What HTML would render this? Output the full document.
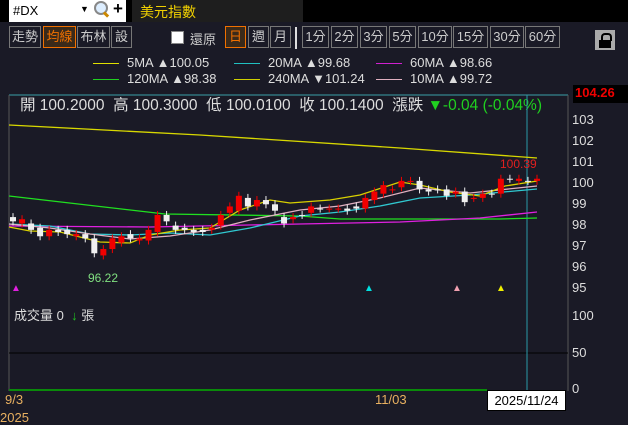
<!DOCTYPE html><html><head><meta charset="utf-8"><style>
body{margin:0;width:628px;height:422px;overflow:hidden;background:#1a1a26;font-family:"Liberation Sans","Noto Sans CJK TC",sans-serif;position:relative;color:#ddd}
.a{position:absolute;white-space:nowrap}
.b{position:absolute;top:26px;height:20px;border:1px solid #777;color:#ccc;font-size:13px;line-height:20px;text-align:center;box-sizing:content-box}
.o{border-color:#f07000;color:#f07000;background:#3a2a1a}
.lg{font-size:13px;color:#ddd}
.ln{display:inline-block;width:26px;height:1px;vertical-align:middle;margin-right:8px}
</style></head><body>
<div class="a" style="left:0;top:0;width:628px;height:22px;background:#000"></div>
<div class="a" style="left:9px;top:0;width:117px;height:22px;background:#fff"></div>
<div class="a" style="left:13px;top:3px;font-size:13px;color:#000">#DX</div>
<div class="a" style="left:80px;top:4px;font-size:9px;color:#000">▼</div>
<div class="a" style="left:94px;top:1px;width:10px;height:10px;border:2px solid #888;border-radius:50%;background:#ddeeff"></div>
<div class="a" style="left:103px;top:13px;width:6px;height:3px;background:#c80;transform:rotate(45deg)"></div>
<div class="a" style="left:113px;top:-1px;font-size:17px;font-weight:bold;color:#000">+</div>
<div class="a" style="left:132px;top:0;width:171px;height:22px;background:#1e1e1e"></div>
<div class="a" style="left:140px;top:2px;font-size:14px;color:#f0d000">美元指數</div>
<div class="b" style="left:9px;width:30px">走勢</div>
<div class="b o" style="left:43px;width:31px">均線</div>
<div class="b" style="left:77px;width:31px">布林</div>
<div class="b" style="left:111px;width:19px">設</div>
<div class="a" style="left:171px;top:31px;width:11px;height:11px;background:#fff;border:1px solid #888"></div>
<div class="a" style="left:190px;top:29px;font-size:13px;color:#ccc">還原</div>
<div class="b o" style="left:225px;width:19px">日</div>
<div class="b" style="left:248px;width:19px">週</div>
<div class="b" style="left:270px;width:19px">月</div>
<div class="a" style="left:295px;top:27px;width:2px;height:22px;background:#ddd"></div>
<div class="b" style="left:302px;width:25px">1分</div>
<div class="b" style="left:331px;width:25px">2分</div>
<div class="b" style="left:360px;width:25px">3分</div>
<div class="b" style="left:389px;width:25px">5分</div>
<div class="b" style="left:418px;width:32px">10分</div>
<div class="b" style="left:453px;width:33px">15分</div>
<div class="b" style="left:490px;width:32px">30分</div>
<div class="b" style="left:525px;width:33px">60分</div>
<div class="a" style="left:595px;top:30px;width:20px;height:20px;background:#aaa"></div>
<div class="a" style="left:601px;top:33px;width:7px;height:6px;border:2px solid #000;border-bottom:none;border-radius:4px 4px 0 0"></div>
<div class="a" style="left:599px;top:40px;width:12px;height:8px;background:#000"></div>
<div class="a lg" style="left:93px;top:55px"><span class="ln" style="background:#e0e000"></span>5MA ▲100.05</div>
<div class="a lg" style="left:234px;top:55px"><span class="ln" style="background:#20c0c0"></span>20MA ▲99.68</div>
<div class="a lg" style="left:376px;top:55px"><span class="ln" style="background:#d020d0"></span>60MA ▲98.66</div>
<div class="a lg" style="left:93px;top:71px"><span class="ln" style="background:#20d020"></span>120MA ▲98.38</div>
<div class="a lg" style="left:234px;top:71px"><span class="ln" style="background:#d0d000"></span>240MA ▼101.24</div>
<div class="a lg" style="left:376px;top:71px"><span class="ln" style="background:#e0b0c0"></span>10MA ▲99.72</div>
<div class="a" style="left:573px;top:85px;width:55px;height:18px;background:#000"></div>
<div class="a" style="left:575px;top:85px;font-size:13px;font-weight:bold;color:#f00000">104.26</div>
<div class="a" style="left:20px;top:93px;font-size:15.5px;color:#ddd">開 100.2000 &nbsp;高 100.3000 &nbsp;低 100.0100 &nbsp;收 100.1400 &nbsp;漲跌 <span style="color:#20d020">▼-0.04 (-0.04%)</span></div>
<svg class="a" style="left:0;top:0" width="628" height="422" id="s">
<line x1="9" y1="95" x2="568" y2="95" stroke="#3aa0a8"/>
<line x1="9" y1="95" x2="9" y2="391" stroke="#555"/>
<line x1="568" y1="95" x2="568" y2="391" stroke="#555"/>
<line x1="9" y1="353" x2="568" y2="353" stroke="#000"/>
<line x1="9" y1="390" x2="487" y2="390" stroke="#0a8a0a" stroke-width="2"/>
<line x1="527" y1="95" x2="527" y2="391" stroke="#2a9aa8"/>
<polyline fill="none" stroke="#d8d800" stroke-width="1.3" points="9,125 200,135 400,148 537,158"/>
<polyline fill="none" stroke="#20e020" stroke-width="1.3" points="9,196 165,214 300,216 340,219 500,219 537,218"/>
<polyline fill="none" stroke="#e020e0" stroke-width="1.3" points="9,226 150,227 300,224 400,222 480,218 537,212"/>
<polyline fill="none" stroke="#30c8d0" stroke-width="1.3" points="9,224 50,226 90,234 130,235 170,233 210,235 250,228 300,216 340,212 380,206 420,198 470,195 537,189"/>
<polyline fill="none" stroke="#e0b0c0" stroke-width="1.3" points="9,224 50,228 90,234 130,239 170,236 210,230 250,220 300,210 340,206 380,198 420,188 470,193 537,186"/>
<polyline fill="none" stroke="#d8d000" stroke-width="1.3" points="9,227 30,231 60,232 100,242 130,243 150,235 180,230 210,228 240,210 270,200 290,203 330,200 360,195 400,182 420,185 450,192 480,196 505,186 537,181"/>
</svg>
<div class="a" style="left:500px;top:157px;font-size:12px;color:#e02020">100.39</div>
<div class="a" style="left:88px;top:271px;font-size:12px;color:#80e080">96.22</div>
<div class="a" style="left:11px;top:283px;font-size:10px;color:#e020e0">▲</div>
<div class="a" style="left:364px;top:283px;font-size:10px;color:#00e0e0">▲</div>
<div class="a" style="left:452px;top:283px;font-size:10px;color:#f0a0b0">▲</div>
<div class="a" style="left:496px;top:283px;font-size:10px;color:#f0f000">▲</div>
<div class="a" style="left:14px;top:305px;font-size:13px;color:#ddd">成交量 0 &nbsp;<span style="color:#20c020">↓</span> 張</div>
<div class="a" style="left:572px;top:112px;font-size:13px">103</div>
<div class="a" style="left:572px;top:133px;font-size:13px">102</div>
<div class="a" style="left:572px;top:154px;font-size:13px">101</div>
<div class="a" style="left:572px;top:175px;font-size:13px">100</div>
<div class="a" style="left:572px;top:196px;font-size:13px">99</div>
<div class="a" style="left:572px;top:217px;font-size:13px">98</div>
<div class="a" style="left:572px;top:238px;font-size:13px">97</div>
<div class="a" style="left:572px;top:259px;font-size:13px">96</div>
<div class="a" style="left:572px;top:280px;font-size:13px">95</div>
<div class="a" style="left:572px;top:308px;font-size:13px">100</div>
<div class="a" style="left:572px;top:345px;font-size:13px">50</div>
<div class="a" style="left:572px;top:381px;font-size:13px">0</div>
<div class="a" style="left:5px;top:392px;font-size:13px;color:#e8b060">9/3</div>
<div class="a" style="left:375px;top:392px;font-size:13px;color:#e8b060">11/03</div>
<div class="a" style="left:0px;top:410px;font-size:13px;color:#e8b060">2025</div>
<div class="a" style="left:487px;top:390px;width:79px;height:21px;background:#fff;border:1px solid #000;box-sizing:border-box;font-size:13px;color:#000;text-align:center;line-height:20px">2025/11/24</div>
<script>
var c=[[98.2,98.4,0],[98.1,98.3,1],[98.1,97.8,0],[97.9,97.5,0],[97.5,97.8,1],[97.7,97.8,0],[97.8,97.6,0],[97.5,97.6,1],[97.6,97.4,0],[97.4,96.7,0],[96.6,96.9,1],[96.9,97.4,1],[97.2,97.5,1],[97.6,97.4,0],[97.3,97.4,1],[97.3,97.8,1],[97.7,98.5,1],[98.5,98.2,0],[98.0,97.8,0],[97.9,97.8,0],[97.7,97.8,0],[97.7,97.8,0],[97.8,97.9,1],[98.0,98.5,1],[98.6,98.9,1],[98.7,99.4,1],[99.3,98.9,0],[98.9,99.2,1],[99.2,99.0,0],[99.0,98.7,0],[98.4,98.1,0],[98.3,98.4,1],[98.5,98.5,0],[98.6,98.9,1],[98.8,98.8,0],[98.8,98.8,1],[98.8,98.8,1],[98.8,98.7,0],[98.8,98.9,0],[98.8,99.3,1],[99.2,99.6,1],[99.5,99.9,1],[99.7,99.7,1],[99.8,100.1,1],[100.1,100.1,1],[100.1,99.7,0],[99.7,99.6,0],[99.7,99.7,0],[99.7,99.4,0],[99.6,99.5,1],[99.6,99.1,0],[99.3,99.3,1],[99.3,99.5,1],[99.5,99.5,0],[99.5,100.2,1],[100.2,100.2,0],[100.1,100.2,1],[100.1,100.1,0],[100.1,100.2,1]];
var s='',n=c.length;function Y(p){return 183+(100-p)*21.3}
c.forEach(function(d,i){var x=13+i*(524/(n-1)),o=d[0],cl=d[1],col=d[2]?'#f00000':'#f0f0f0';var t=Y(Math.max(o,cl)),b=Y(Math.min(o,cl));var h=Math.max(b-t,1);
s+='<line x1="'+x+'" y1="'+(t-4)+'" x2="'+x+'" y2="'+(b+4)+'" stroke="'+col+'"/>';
s+='<rect x="'+(x-3)+'" y="'+t+'" width="6" height="'+h+'" fill="'+col+'"/>';});
document.getElementById('s').insertAdjacentHTML('beforeend',s);
</script>
</body></html>
